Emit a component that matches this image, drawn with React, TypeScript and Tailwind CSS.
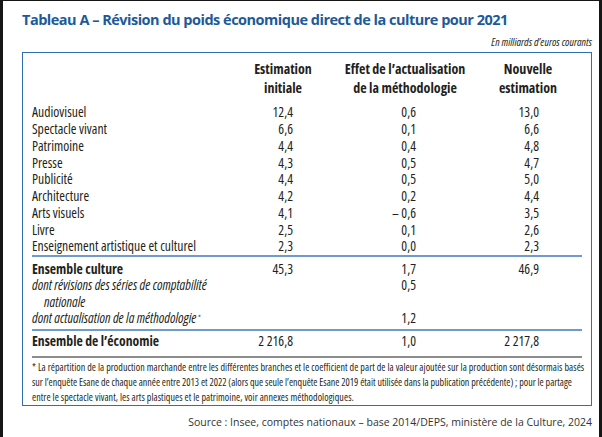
const rows: [string, string, string, string][] = [
  ["Audiovisuel", "12,4", "0,6", "13,0"],
  ["Spectacle vivant", "6,6", "0,1", "6,6"],
  ["Patrimoine", "4,4", "0,4", "4,8"],
  ["Presse", "4,3", "0,5", "4,7"],
  ["Publicité", "4,4", "0,5", "5,0"],
  ["Architecture", "4,2", "0,2", "4,4"],
  ["Arts visuels", "4,1", "– 0,6", "3,5"],
  ["Livre", "2,5", "0,1", "2,6"],
  ["Enseignement artistique et culturel", "2,3", "0,0", "2,3"],
];

function Row({
  label,
  a,
  b,
  c,
  labelClass = "",
  h = "h-[16.75px] leading-[16.75px]",
}: {
  label: React.ReactNode;
  a?: string;
  b?: string;
  c?: string;
  labelClass?: string;
  h?: string;
}) {
  return (
    <div className={`grid grid-cols-[201px_60px_123px_123px] ${h}`}>
      <div className={`whitespace-nowrap ${labelClass}`}>{label}</div>
      <div className="text-right">{a}</div>
      <div className="text-right whitespace-pre">{b}</div>
      <div className="text-right">{c}</div>
    </div>
  );
}

export default function App() {
  return (
    <div className="w-[602px] h-[437px] overflow-hidden bg-white border-l-[3px] border-r-[3px] border-t border-[#161616] pl-[19px] pr-[7px] pt-[9px] text-[#231f20] font-['Open_Sans',sans-serif]">
      <h1 className="whitespace-nowrap font-bold [font-stretch:88%] tracking-[-0.5px] text-[14.5px] leading-[20px] text-[#1d5a97]">
        Tableau A – Révision du poids économique direct de la culture pour 2021
      </h1>
      <p className="mt-[5px] text-right italic [font-stretch:75%] text-[11px] leading-[14px]">
        En milliards d’euros courants
      </p>
      <div className="mt-[3px] border border-[#3170ad] px-[9px] [font-stretch:75%]">
        <div className="pt-[6px] grid grid-cols-[191px_120px_124px_115px] text-center font-bold text-[14px] leading-[19px] whitespace-nowrap">
          <div />
          <div>
            Estimation
            <br />
            initiale
          </div>
          <div>
            Effet de l’actualisation
            <br />
            de la méthodologie
          </div>
          <div className="pl-[7px]">
            Nouvelle
            <br />
            estimation
          </div>
        </div>
        <div className="mt-[7.3px] text-[13.7px]">
          {rows.map((r) => (
            <Row key={r[0]} label={r[0]} a={r[1]} b={r[2]} c={r[3]} />
          ))}
          <div className="mt-[0.4px] h-[2px] bg-[#6f9bcb]" />
          <div className="mt-[3.5px]">
            <Row label="Ensemble culture" labelClass="font-bold" a="45,3" b="1,7" c="46,9" h="h-[16.5px] leading-[16.5px]" />
            <Row label="dont révisions des séries de comptabilité" labelClass="italic" b="0,5" h="h-[16.5px] leading-[16.5px]" />
            <Row label="nationale" labelClass="italic pl-[12px]" h="h-[16.5px] leading-[16.5px]" />
            <Row
              label={
                <>
                  dont actualisation de la méthodologie
                  <span className="text-[8px] align-top relative top-[-1px] ml-[1px]">*</span>
                </>
              }
              labelClass="italic"
              b="1,2"
              h="h-[16.5px] leading-[16.5px]"
            />
          </div>
          <div className="mt-[2px] h-[2px] bg-[#6f9bcb]" />
          <div className="mt-[2.5px]">
            <Row label="Ensemble de l’économie" labelClass="font-bold" a="2 216,8" b="1,0" c="2 217,8" h="h-[16.5px] leading-[16.5px]" />
          </div>
          <div className="mt-[6.3px] h-[2px] bg-[#8c8c8c]" />
        </div>
        <div className="mt-[2px] text-[10px] leading-[15px] whitespace-nowrap">
          <div className="tracking-[0.06px]">
            * La répartition de la production marchande entre les différentes branches et le coefficient de part de la valeur ajoutée sur la production sont désormais basés
          </div>
          <div>
            sur l’enquête Esane de chaque année entre 2013 et 2022 (alors que seule l’enquête Esane 2019 était utilisée dans la publication précédente) ; pour le partage
          </div>
          <div className="tracking-[0.06px]">
            entre le spectacle vivant, les arts plastiques et le patrimoine, voir annexes méthodologiques.
          </div>
        </div>
      </div>
      <p className="mt-[9px] text-right text-[10.5px] leading-[14px] text-[#333]">
        Source : Insee, comptes nationaux – base 2014/DEPS, ministère de la Culture, 2024
      </p>
    </div>
  );
}
